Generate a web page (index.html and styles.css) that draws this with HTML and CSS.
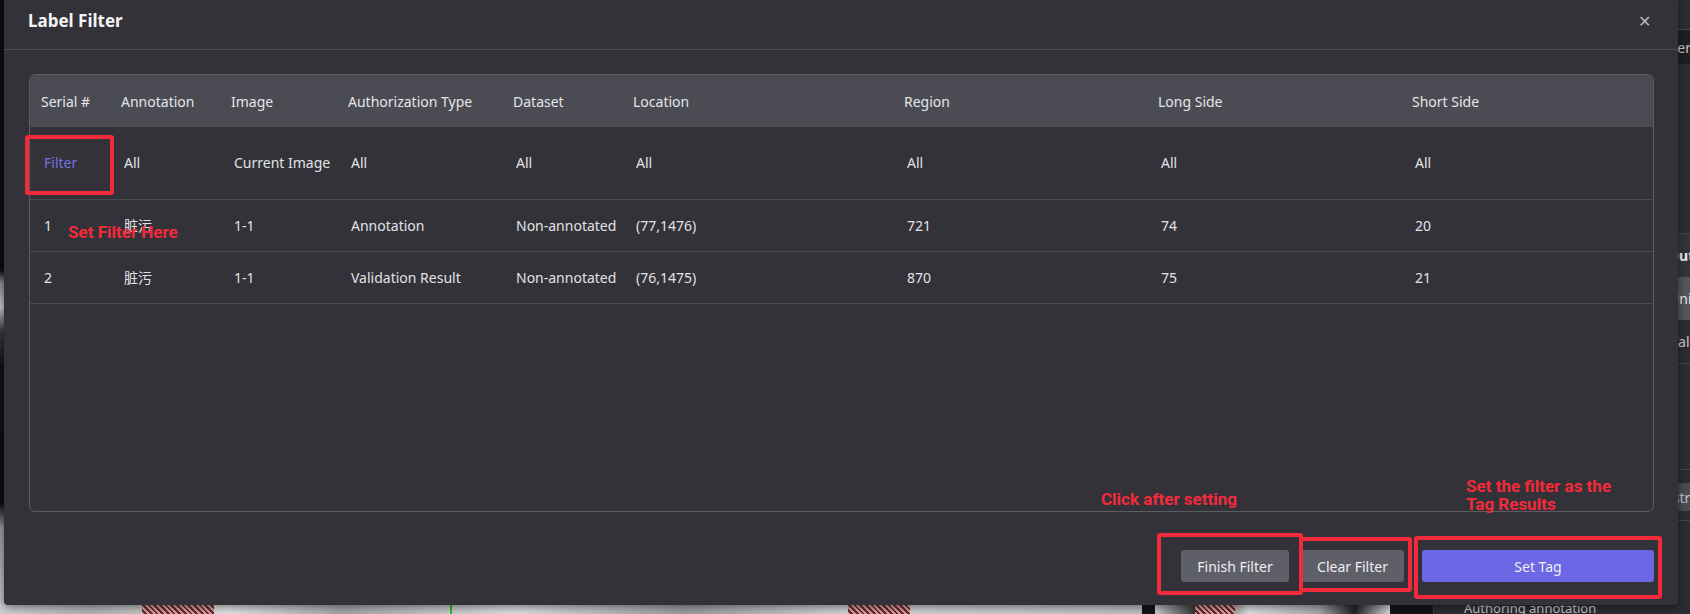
FILE: index.html
```html
<!DOCTYPE html>
<html lang="en">
<head>
<meta charset="utf-8">
<title>Label Filter</title>
<link rel="stylesheet" href="styles.css">
</head>
<body>
<div class="app">
  <div class="canvas">
    <div class="pane pane-main"><span class="hatch hatch-a"></span><span class="guide"></span><span class="hatch hatch-b"></span></div>
    <div class="pane pane-side"><span class="hatch hatch-c"></span></div>
  </div>
  <aside class="sidebar">
    <div class="sb-top"></div>
    <div class="sb-row sb-dark">Layer</div>
    <div class="sb-gap"></div>
    <div class="sb-row sb-title">Output</div>
    <div class="sb-row sb-grey">Union</div>
    <div class="sb-row sb-plain">Validation</div>
    <div class="sb-gap2"></div>
    <div class="sb-row sb-grey2">Distribution</div>
    <div class="sb-rest">Authoring annotation</div>
  </aside>
</div>

<div class="modal">
  <div class="modal-header">
    <h2 class="modal-title">Label Filter</h2>
    <span class="modal-close">&#x2715;</span>
  </div>
  <div class="modal-body">
    <div class="table-box">
      <table class="grid">
        <colgroup>
          <col class="c1"><col class="c2"><col class="c3"><col class="c4"><col class="c5"><col class="c6"><col class="c7"><col class="c8"><col class="c9">
        </colgroup>
        <thead>
          <tr>
            <th>Serial #</th><th>Annotation</th><th>Image</th><th>Authorization Type</th><th>Dataset</th><th>Location</th><th>Region</th><th>Long Side</th><th>Short Side</th>
          </tr>
        </thead>
        <tbody>
          <tr class="filter-row">
            <td><span class="filter-link">Filter</span></td><td>All</td><td>Current Image</td><td>All</td><td>All</td><td>All</td><td>All</td><td>All</td><td>All</td>
          </tr>
          <tr>
            <td>1</td><td>脏污</td><td>1-1</td><td>Annotation</td><td>Non-annotated</td><td>(77,1476)</td><td>721</td><td>74</td><td>20</td>
          </tr>
          <tr>
            <td>2</td><td>脏污</td><td>1-1</td><td>Validation Result</td><td>Non-annotated</td><td>(76,1475)</td><td>870</td><td>75</td><td>21</td>
          </tr>
        </tbody>
      </table>
    </div>
  </div>
  <div class="modal-footer">
    <button class="btn btn-grey btn-finish">Finish Filter</button>
    <button class="btn btn-grey btn-clear">Clear Filter</button>
    <button class="btn btn-primary btn-tag">Set Tag</button>
  </div>
</div>

<div class="mark box-filter"></div>
<div class="mark box-finish"></div>
<div class="mark box-clear"></div>
<div class="mark box-tag"></div>
<div class="note note-filter">Set Filter Here</div>
<div class="note note-click">Click after setting</div>
<div class="note note-tag">Set the filter as the<br>Tag Results</div>
</body>
</html>
```

FILE: styles.css
```css
* { box-sizing: border-box; }
html, body { margin: 0; padding: 0; }
body {
  width: 1690px;
  height: 614px;
  overflow: hidden;
  position: relative;
  background: #1b1b1f;
  font-family: "Noto Sans", "Noto Sans CJK SC", sans-serif;
  color: #e2e2e6;
}

/* background application */
.app {
  display: flex;
  width: 1690px;
  height: 614px;
}
.canvas {
  display: flex;
  width: 1433px;
  background: #141416;
}
.pane { position: relative; overflow: hidden; }
.pane-main {
  width: 1142px;
  background:
    linear-gradient(180deg, #0e0e10 0%, #0e0e10 44%, #8a8a8a 46%, #c9c9c9 50%, #3a3a3a 54%, #111 60%, #0f0f10 82%, #9a9a9a 86%, #cfcfcf 100%);
}
.pane-main::after {
  content: "";
  position: absolute;
  left: 0; right: 0; bottom: 0; height: 10px;
  background: linear-gradient(90deg, #d0d0d0 0%, #b5b5b5 8%, #e4e4e4 20%, #a8a8a8 30%, #e0e0e0 45%, #9e9e9e 60%, #d8d8d8 75%, #c0c0c0 100%);
}
.hatch {
  position: absolute;
  bottom: 0;
  height: 10px;
  z-index: 1;
  background: repeating-linear-gradient(45deg, #d9a0a0 0 2px, #6a2a2a 2px 4px);
}
.hatch-a { left: 142px; width: 72px; }
.hatch-b { left: 848px; width: 62px; }
.hatch-c { left: 40px; width: 40px; }
.guide {
  position: absolute;
  left: 450px; bottom: 0;
  width: 2px; height: 10px;
  background: #22c22a;
  z-index: 2;
}
.pane-side {
  width: 235px;
  margin-left: 13px;
  margin-right: 43px;
  background: linear-gradient(180deg, #101012 0%, #101012 90%, #cfcfcf 100%);
}
.pane-side::after {
  content: "";
  position: absolute;
  left: 0; right: 0; bottom: 0; height: 10px;
  background: linear-gradient(90deg, #cfcfcf 0%, #1a1a1a 20%, #e0e0e0 40%, #aaa 70%, #222 85%, #ddd 100%);
}
.sidebar {
  flex: 1;
  display: flex;
  flex-direction: column;
  background: #2c2c32;
  border-left: 1px solid #3c3c44;
  font-size: 14px;
  color: #c8c8cc;
  white-space: nowrap;
  overflow: hidden;
}
.sidebar > * { flex-shrink: 0; }
.sb-row { display: flex; align-items: center; }
.sb-top { height: 30px; border-bottom: 1px solid #45454c; }
.sb-dark { height: 34px; background: #1f1f24; padding-left: 221px; }
.sb-gap { height: 170px; border-bottom: 1px solid #45454c; }
.sb-title { height: 43px; font-weight: 700; color: #f0f0f0; background: #34343b; padding-left: 234px; }
.sb-grey { height: 43px; background: #55565e; color: #e8e8ea; padding-left: 235px; }
.sb-plain { height: 44px; border-bottom: 1px solid #45454c; padding-left: 236px; }
.sb-gap2 { height: 106px; border-bottom: 1px solid #45454c; }
.sb-grey2 { height: 28px; background: #4b4c54; padding-left: 225px; margin-top: 13px; }
.sb-rest {
  flex: 1 1 0;
  min-height: 0;
  overflow: hidden;
  border-top: 1px solid #45454c;
  margin-top: 9px;
  padding: 78px 0 0 30px;
  font-size: 13px;
}

/* modal */
.modal {
  position: absolute;
  left: 4px;
  top: 0;
  width: 1674px;
  height: 605px;
  background: #323238;
  border-radius: 0 0 4px 4px;
  box-shadow: 0 2px 10px rgba(0,0,0,0.5);
  display: flex;
  flex-direction: column;
  z-index: 5;
}
.modal-header {
  height: 50px;
  display: flex;
  justify-content: space-between;
  align-items: flex-start;
  padding: 9px 27px 0 24px;
  border-bottom: 1px solid #4a4a52;
}
.modal-title {
  margin: 0;
  font-size: 17px;
  font-weight: 700;
  line-height: 24px;
  color: #f4f4f6;
}
.modal-close {
  font-size: 16px;
  line-height: 24px;
  color: #b8b8be;
}
.modal-body {
  flex: 1;
  padding: 24px 24px 0 25px;
  display: flex;
  flex-direction: column;
}
.table-box {
  height: 438px;
  border: 1px solid #5c5c64;
  border-radius: 6px;
  overflow: hidden;
}
.grid {
  width: 100%;
  border-collapse: collapse;
  table-layout: fixed;
  font-size: 14px;
}
.c1 { width: 80px; }
.c2 { width: 110px; }
.c3 { width: 117px; }
.c4 { width: 165px; }
.c5 { width: 120px; }
.c6 { width: 271px; }
.c7 { width: 254px; }
.c8 { width: 254px; }
.c9 { width: auto; }
.grid th {
  height: 52px;
  background: #4a4b53;
  font-weight: 400;
  text-align: left;
  padding: 0 0 0 11px;
  color: #e6e6ea;
  white-space: nowrap;
}
.grid td {
  height: 52px;
  padding: 0 0 0 14px;
  border-bottom: 1px solid #4a4a52;
  white-space: nowrap;
  color: #e2e2e6;
}
.filter-row td { height: 72px; }
.filter-link { color: #7a70e0; }

.modal-footer {
  height: 93px;
  display: flex;
  justify-content: flex-end;
  align-items: flex-start;
  padding: 38px 24px 0 0;
}
.btn {
  height: 32px;
  border: none;
  border-radius: 3px;
  font-family: "Noto Sans", sans-serif;
  font-size: 14px;
  color: #eeeef2;
  padding: 0;
}
.btn-grey { background: #5e5f69; }
.btn-primary { background: #6c67e4; }
.btn-finish { width: 108px; }
.btn-clear { width: 103px; margin-left: 12px; }
.btn-tag { width: 232px; margin-left: 18px; }

/* red annotation overlays */
.mark {
  position: absolute;
  border: 4px solid #f22a3b;
  border-radius: 3px;
  z-index: 10;
}
.box-filter { left: 25px; top: 135px; width: 89px; height: 60px; }
.box-finish { left: 1157px; top: 533px; width: 146px; height: 62px; }
.box-clear { left: 1299px; top: 537px; width: 113px; height: 55px; }
.box-tag { left: 1414px; top: 536px; width: 248px; height: 63px; }
.note {
  position: absolute;
  z-index: 11;
  color: #f22a3b;
  font-family: "Roboto", "Liberation Sans", sans-serif;
  font-weight: 700;
  font-size: 17px;
  line-height: 18px;
}
.note-filter { left: 68px; top: 223px; }
.note-click { left: 1101px; top: 490px; }
.note-tag { left: 1466px; top: 477px; }
```
